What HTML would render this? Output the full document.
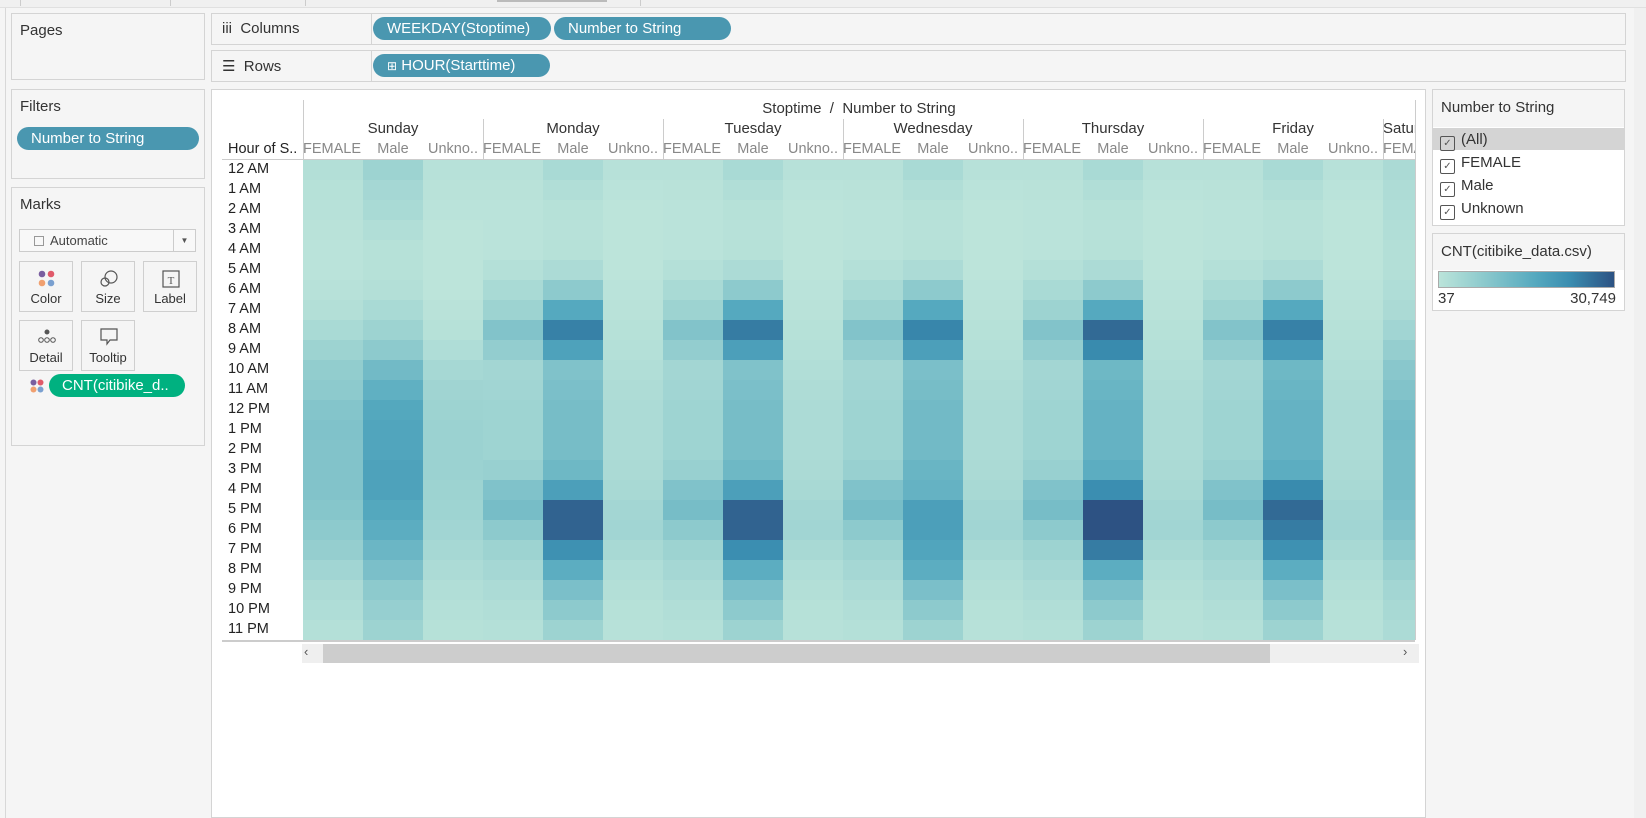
<!DOCTYPE html>
<html><head><meta charset="utf-8"><style>
*{box-sizing:border-box;margin:0;padding:0}
body{width:1646px;height:818px;background:#f5f5f5;font-family:"Liberation Sans",sans-serif;color:#333;position:relative;overflow:hidden;font-size:14px}
.abs{position:absolute}
.panel{position:absolute;background:#f5f5f5;border:1px solid #d4d4d4}
.ttl{position:absolute;left:8px;font-size:15px;color:#333;white-space:nowrap}
.pill{position:absolute;height:23px;border-radius:12px;background:#4a97b0;color:#fff;font-size:15px;line-height:23px;padding-left:14px;white-space:nowrap}
.shelf{position:absolute;left:211px;width:1415px;background:#f5f5f5;border:1px solid #d4d4d4}
.mk{position:absolute;width:54px;height:51px;border:1px solid #cfcfcf;background:#f5f5f5;text-align:center;font-size:13px;color:#333}
.mk span{position:absolute;bottom:5px;left:0;right:0}
.hr{position:absolute;left:228px;font-size:14.5px;color:#222;white-space:nowrap}
.sub{position:absolute;top:141px;font-size:14.5px;color:#888;width:60px;text-align:center;white-space:nowrap;overflow:hidden}
.day{position:absolute;top:120px;font-size:15px;color:#333;text-align:center;width:180px;white-space:nowrap}
.chk{display:inline-block;width:15px;height:15px;border:1px solid #555;border-radius:2px;vertical-align:-2px;margin-right:6px;font-size:10px;line-height:13px;text-align:center;color:#555}
#hm{width:1646px;height:818px}
</style></head><body>
<div class="abs" style="left:0;top:0;width:1646px;height:8px;background:#f0f0f0;border-bottom:1px solid #e0e0e0"></div>
<div class="abs" style="left:20px;top:0;width:1px;height:6px;background:#ccc"></div>
<div class="abs" style="left:170px;top:0;width:1px;height:6px;background:#ccc"></div>
<div class="abs" style="left:305px;top:0;width:1px;height:6px;background:#ccc"></div>
<div class="abs" style="left:497px;top:0;width:110px;height:2px;background:#bbb"></div>
<div class="abs" style="left:640px;top:0;width:1px;height:6px;background:#ccc"></div>
<div class="abs" style="left:5px;top:8px;width:1px;height:810px;background:#d8d8d8"></div>

<div class="panel" style="left:11px;top:13px;width:194px;height:67px"><div class="ttl" style="top:8px">Pages</div></div>
<div class="panel" style="left:11px;top:89px;width:194px;height:90px"><div class="ttl" style="top:8px">Filters</div>
<div class="pill" style="left:5px;top:37px;width:182px;background:#4a97b0">Number to String</div></div>
<div class="panel" style="left:11px;top:187px;width:194px;height:259px"><div class="ttl" style="top:8px">Marks</div>
<div class="abs" style="left:7px;top:41px;width:177px;height:23px;border:1px solid #ccc;background:#f8f8f8;font-size:13px;line-height:21px;padding-left:14px;color:#444"><span style="display:inline-block;width:10px;height:10px;border:1px solid #999;vertical-align:-1px;margin-right:6px"></span>Automatic<span style="position:absolute;right:0;top:0;width:22px;height:21px;border-left:1px solid #ccc;text-align:center;font-size:8px;color:#555">▼</span></div>
<div class="mk" style="left:7px;top:73px"><svg class="abs" style="left:18px;top:8px" width="18" height="18"><circle cx="4" cy="4" r="3.3" fill="#7a5fa0"/><circle cx="13" cy="4" r="3.3" fill="#e05a6a"/><circle cx="4" cy="13" r="3.3" fill="#f0a070"/><circle cx="13" cy="13" r="3.3" fill="#7aa0d0"/></svg><span>Color</span></div>
<div class="mk" style="left:69px;top:73px"><svg class="abs" style="left:16px;top:6px" width="22" height="22" fill="none" stroke="#555" stroke-width="1.2"><circle cx="13" cy="9" r="6"/><circle cx="7" cy="14" r="4"/></svg><span>Size</span></div>
<div class="mk" style="left:131px;top:73px"><svg class="abs" style="left:17px;top:7px" width="20" height="20" fill="none" stroke="#555" stroke-width="1.2"><rect x="2" y="2" width="16" height="16"/><text x="10" y="15" font-size="11" text-anchor="middle" fill="#555" stroke="none" font-family="Liberation Serif">T</text></svg><span>Label</span></div>
<div class="mk" style="left:7px;top:132px"><svg class="abs" style="left:16px;top:6px" width="22" height="20" fill="none" stroke="#555" stroke-width="1"><circle cx="11" cy="5" r="2" fill="#555"/><circle cx="5" cy="13" r="2.3"/><circle cx="11" cy="13" r="2.3"/><circle cx="17" cy="13" r="2.3"/></svg><span>Detail</span></div>
<div class="mk" style="left:69px;top:132px"><svg class="abs" style="left:16px;top:5px" width="22" height="22" fill="none" stroke="#555" stroke-width="1.2"><path d="M3 3H19V14H12L9 18V14H3Z"/></svg><span>Tooltip</span></div>
<svg class="abs" style="left:18px;top:191px" width="14" height="14"><circle cx="3.5" cy="3.5" r="3" fill="#7a5fa0"/><circle cx="10.5" cy="3.5" r="3" fill="#e05a6a"/><circle cx="3.5" cy="10.5" r="3" fill="#f0a070"/><circle cx="10.5" cy="10.5" r="3" fill="#7aa0d0"/></svg>
<div class="pill" style="left:37px;top:186px;width:136px;background:#00b180;font-size:15px;padding-left:13px">CNT(citibike_d..</div>
</div>

<div class="shelf" style="top:13px;height:32px"><div class="abs" style="left:10px;top:6px;font-size:15px;white-space:nowrap">iii&nbsp; Columns</div><div class="abs" style="left:159px;top:0;width:1px;height:30px;background:#d4d4d4"></div></div>
<div class="pill" style="left:373px;top:17px;width:178px">WEEKDAY(Stoptime)</div>
<div class="pill" style="left:554px;top:17px;width:177px">Number to String</div>
<div class="shelf" style="top:50px;height:32px"><div class="abs" style="left:10px;top:6px;font-size:15px;white-space:nowrap">☰&nbsp; Rows</div><div class="abs" style="left:159px;top:0;width:1px;height:30px;background:#d4d4d4"></div></div>
<div class="pill" style="left:373px;top:54px;width:177px;padding-left:14px"><span style="font-size:12px">⊞</span> HOUR(Starttime)</div>

<div class="abs" style="left:211px;top:89px;width:1215px;height:729px;background:#fff;border:1px solid #d4d4d4"></div>
<div class="abs" style="left:303px;top:100px;width:1px;height:540px;background:#ccc"></div>
<div class="abs" style="left:303px;top:100px;width:1112px;text-align:center;font-size:15px;color:#333">Stoptime&nbsp; /&nbsp; Number to String</div>
<div class="abs" style="left:228px;top:141px;font-size:14.5px;color:#222;white-space:nowrap">Hour of S..</div>
<div class="abs" style="left:222px;top:159px;width:1193px;height:1px;background:#ccc"></div>
<div id="hm" class="abs" style="left:0;top:0"></div>
<div class="abs" style="left:222px;top:640px;width:1193px;height:2px;background:#ccc"></div>
<div class="abs" style="left:302px;top:644px;width:1117px;height:19px;background:#efefef"></div>
<div class="abs" style="left:323px;top:644px;width:947px;height:19px;background:#cdcdcd"></div>
<div class="abs" style="left:304px;top:644px;font-size:13px;color:#555">‹</div>
<div class="abs" style="left:1403px;top:644px;font-size:13px;color:#555">›</div>

<div class="panel" style="left:1432px;top:89px;width:193px;height:137px;background:#fff">
<div class="abs" style="left:0;top:0;width:191px;height:37px;background:#f5f5f5"></div>
<div class="ttl" style="top:9px">Number to String</div>
<div class="abs" style="left:0;top:38px;width:191px;height:22px;background:#d4d4d4"></div>
<div class="abs" style="left:7px;top:38px;font-size:15px;line-height:23px;white-space:nowrap"><div><span class="chk">✓</span>(All)</div><div><span class="chk">✓</span>FEMALE</div><div><span class="chk">✓</span>Male</div><div><span class="chk">✓</span>Unknown</div></div>
</div>
<div class="panel" style="left:1432px;top:233px;width:193px;height:78px;background:#fff">
<div class="abs" style="left:0;top:0;width:191px;height:36px;background:#f5f5f5"></div>
<div class="ttl" style="top:9px">CNT(citibike_data.csv)</div>
<div class="abs" style="left:5px;top:37px;width:177px;height:17px;border:1px solid #aaa;background:linear-gradient(90deg,#bbe4da,#8dcacd 25%,#55a9bf 55%,#3a8db0 75%,#2d5283)"></div>
<div class="abs" style="left:5px;top:56px;font-size:15px">37</div>
<div class="abs" style="right:8px;top:56px;font-size:15px">30,749</div>
</div>
<div class="abs" style="left:1634px;top:8px;width:12px;height:810px;background:#f0f0f0"></div>

<script>
var hours=["12 AM","1 AM","2 AM","3 AM","4 AM","5 AM","6 AM","7 AM","8 AM","9 AM","10 AM","11 AM","12 PM","1 PM","2 PM","3 PM","4 PM","5 PM","6 PM","7 PM","8 PM","9 PM","10 PM","11 PM"];
var days=["Sunday","Monday","Tuesday","Wednesday","Thursday","Friday","Saturday"];
var SF=[.06,.04,.03,.02,.01,.01,.03,.06,.12,.2,.27,.3,.34,.36,.35,.35,.35,.33,.3,.25,.17,.11,.08,.05];
var SM=[.2,.15,.12,.07,.04,.04,.06,.12,.2,.3,.42,.5,.56,.58,.58,.6,.6,.56,.52,.45,.38,.3,.24,.2];
var SU=[.03,.02,.01,0,0,0,0,.02,.04,.08,.14,.18,.2,.21,.21,.21,.2,.19,.17,.14,.1,.07,.05,.04];
var WF=[.03,.02,.01,.01,.01,.05,.12,.2,.35,.26,.16,.17,.19,.19,.19,.23,.36,.4,.3,.2,.15,.1,.07,.05];
var WU=[.03,.01,0,0,0,0,.01,.02,.04,.05,.07,.09,.1,.1,.1,.11,.13,.16,.17,.13,.08,.06,.04,.03];
function M(p8,p9,mid,p4,p5,p6,p7){return [.12,.07,.04,.03,.04,.1,.3,.55,p8,p9,mid,mid+.02,mid+.04,mid+.04,mid+.04,mid+.08,p4,p5,p6,p7,.52,.38,.3,.2];}
var data=[[SF,SM,SU],
[WF,M(.8,.6,.36,.62,.93,.93,.72),WU],
[WF,M(.82,.62,.36,.62,.93,.93,.74),WU],
[WF,M(.78,.62,.38,.48,.62,.62,.58),WU],
[WF,M(.9,.76,.44,.74,1,1,.82),WU],
[WF,M(.8,.65,.44,.76,.9,.82,.72),WU],
[SF.map(function(v){return v+.05}),SM,SU]];
var st=[[0,[188,228,218]],[.3,[141,202,205]],[.55,[85,169,191]],[.75,[58,141,176]],[1,[45,82,131]]];
function col(t){t=Math.max(0,Math.min(1,t));for(var i=1;i<st.length;i++){if(t<=st[i][0]){var a=st[i-1],b=st[i],f=(t-a[0])/(b[0]-a[0]);return "rgb("+a[1].map(function(c,k){return Math.round(c+(b[1][k]-c)*f)}).join(",")+")";}}}
var h="";
for(var r=0;r<24;r++)h+='<div class="hr" style="top:'+(161+r*20)+'px">'+hours[r]+'</div>';
var subs=["FEMALE","Male","Unkno.."];
for(var d=0;d<7;d++){var x0=303+d*180;
 h+='<div class="day" style="left:'+x0+'px;'+(d==6?'width:32px;text-align:left;overflow:hidden':'')+'">'+days[d]+'</div>';
 if(d>0)h+='<div class="abs" style="left:'+x0+'px;top:119px;width:1px;height:521px;background:#ccc"></div>';
 for(var g=0;g<3;g++){var x=x0+g*60;if(x>=1415)continue;var w=Math.min(60,1415-x);
  h+='<div class="sub" style="left:'+x+'px;width:'+w+'px;'+(g==0?'text-align:left;':'')+'">'+subs[g]+'</div>';
  for(var r=0;r<24;r++){h+='<div class="abs" style="left:'+x+'px;top:'+(160+r*20)+'px;width:'+w+'px;height:20px;background:'+col(data[d][g][r])+'"></div>';}
 }}
h+='<div class="abs" style="left:1415px;top:100px;width:1px;height:540px;background:#ccc"></div>';
document.getElementById("hm").innerHTML=h;
</script>
</body></html>
